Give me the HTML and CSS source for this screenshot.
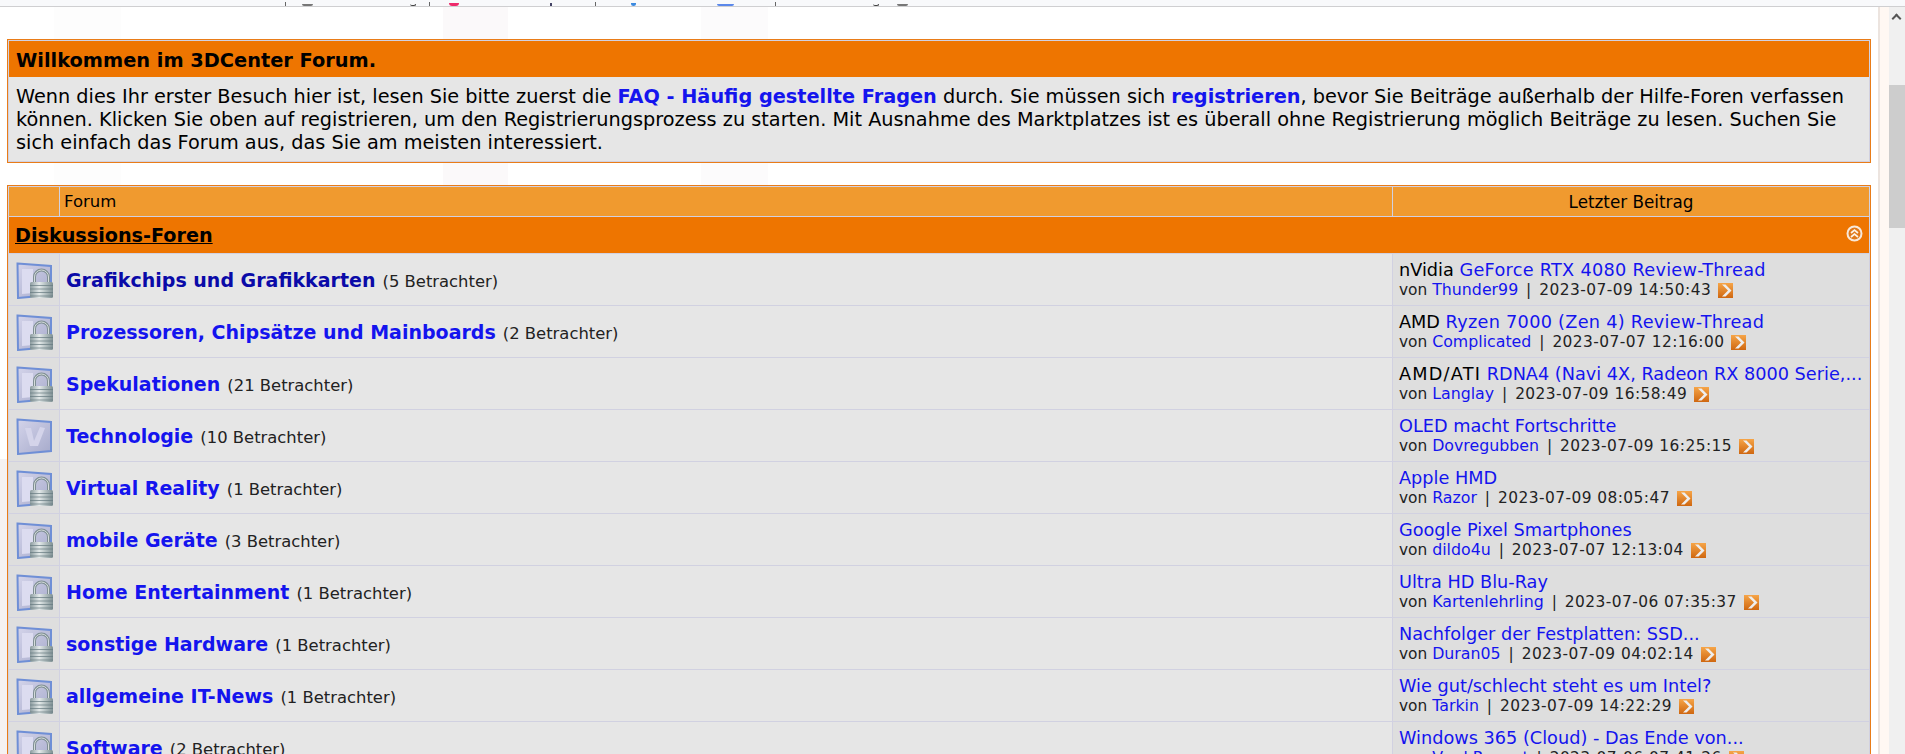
FILE: index.html
```html
<!DOCTYPE html>
<html lang="de">
<head>
<meta charset="utf-8">
<title>3DCenter Forum</title>
<link rel="stylesheet" href="styles.css">
</head>
<body>
<svg class="defs" width="0" height="0" aria-hidden="true">
  <defs>
    <linearGradient id="lockBody" x1="0" y1="0" x2="1" y2="0">
      <stop offset="0" stop-color="#8a9a9e"/><stop offset="0.4" stop-color="#e4eaea"/><stop offset="1" stop-color="#7d8f92"/>
    </linearGradient>
    <linearGradient id="pane" x1="0" y1="0" x2="1" y2="1">
      <stop offset="0" stop-color="#d4d4ea"/><stop offset="1" stop-color="#a6aacb"/>
    </linearGradient>
    <linearGradient id="goBtn" x1="0" y1="0" x2="0" y2="1">
      <stop offset="0" stop-color="#f6a548"/><stop offset="1" stop-color="#cf6710"/>
    </linearGradient>
    <symbol id="locked" viewBox="0 0 37 37">
      <path d="M1.5 1.5 L35 4 V33 L2 36 Z" fill="url(#pane)" stroke="#6f8fd6" stroke-width="2"/>
      <path d="M6 7 H17 V31 L6 32 Z" fill="#dcdcf0"/>
      <path d="M18.5 20 V15 a7 7 0 0 1 14 0 V20" fill="none" stroke="#7f8f93" stroke-width="3"/>
      <path d="M18.5 20 V15 a7 7 0 0 1 14 0 V20" fill="none" stroke="#d5dcdc" stroke-width="1"/>
      <rect x="14" y="20" width="23" height="16" rx="1.5" fill="url(#lockBody)"/>
      <path d="M14 23.5 H37 M14 27 H37 M14 30.5 H37 M14 34 H37" stroke="#667a80" stroke-width="1" opacity=".7"/>
    </symbol>
    <symbol id="open" viewBox="0 0 37 37">
      <path d="M1.5 1.5 L35 4 V33 L2 36 Z" fill="url(#pane)" stroke="#6f8fd6" stroke-width="2"/>
      <path d="M9 10 L15 10 L18 23 L24 9 L29 10 L22 28 L14 28 Z" fill="#d4d4ea"/>
    </symbol>
    <symbol id="go" viewBox="0 0 15 15">
      <rect width="15" height="15" fill="url(#goBtn)"/>
      <path d="M4 1.5 L10 7.5 L4 13.5 H7.5 L13.5 7.5 L7.5 1.5 Z" fill="#eee"/>
    </symbol>
  </defs>
</svg>

<div class="browser-strip">
  <i class="mark mark-bar m1"></i><i class="mark mark-dot m2"></i><i class="mark mark-hook m10"></i><i class="mark mark-bar m3"></i>
  <i class="mark mark-pink m4"></i><i class="mark mark-tick m11"></i><i class="mark mark-bar m5"></i><i class="mark mark-blue m6"></i>
  <i class="mark mark-wide m7"></i><i class="mark mark-bar m8"></i><i class="mark mark-hook m12"></i><i class="mark mark-dot m9"></i>
</div>

<div class="viewport">
  <main class="page">
    <section class="welcome">
      <h1 class="welcome-head">Willkommen im 3DCenter Forum.</h1>
      <p class="welcome-body">Wenn dies Ihr erster Besuch hier ist, lesen Sie bitte zuerst die <a href="#"><b>FAQ - Häufig gestellte Fragen</b></a> durch. Sie müssen sich <a href="#"><b>registrieren</b></a>, bevor Sie Beiträge außerhalb der Hilfe-Foren verfassen können. Klicken Sie oben auf registrieren, um den Registrierungsprozess zu starten. Mit Ausnahme des Marktplatzes ist es überall ohne Registrierung möglich Beiträge zu lesen. Suchen Sie sich einfach das Forum aus, das Sie am meisten interessiert.</p>
    </section>

    <table class="forums">
      <colgroup><col class="c-icon"><col class="c-forum"><col class="c-last"></colgroup>
      <thead>
        <tr class="head-row"><th></th><th class="th-forum">Forum</th><th class="th-last">Letzter Beitrag</th></tr>
      </thead>
      <tbody>
        <tr class="cat-row"><td colspan="3"><div class="cat-inner"><a href="#">Diskussions-Foren</a>
          <svg class="collapse" width="17" height="17" viewBox="0 0 17 17"><circle cx="8.5" cy="8.5" r="7" fill="#e0781a" stroke="#f8e8d8" stroke-width="2"/><path d="M5 8 L8.5 5 L12 8 M5 12 L8.5 9 L12 12" fill="none" stroke="#fdf3e6" stroke-width="1.7"/></svg></div></td></tr>

        <tr><td class="ic"><svg class="f-icon"><use href="#locked"/></svg></td><td class="fc"><a class="ft visited" href="#">Grafikchips und Grafikkarten</a> <span class="vw">(5 Betrachter)</span></td><td class="lc"><div class="l1">nVidia <a class="wide" href="#">GeForce RTX 4080 Review-Thread</a></div><div class="l2">von <a href="#">Thunder99</a> <span class="sep">|</span> <span class="dt">2023-07-09 14:50:43</span> <svg class="go"><use href="#go"/></svg></div></td></tr>
        <tr><td class="ic"><svg class="f-icon"><use href="#locked"/></svg></td><td class="fc"><a class="ft" href="#">Prozessoren, Chipsätze und Mainboards</a> <span class="vw">(2 Betrachter)</span></td><td class="lc"><div class="l1">AMD <a class="wide" href="#">Ryzen 7000 (Zen 4) Review-Thread</a></div><div class="l2">von <a href="#">Complicated</a> <span class="sep">|</span> <span class="dt">2023-07-07 12:16:00</span> <svg class="go"><use href="#go"/></svg></div></td></tr>
        <tr><td class="ic"><svg class="f-icon"><use href="#locked"/></svg></td><td class="fc"><a class="ft" href="#">Spekulationen</a> <span class="vw">(21 Betrachter)</span></td><td class="lc"><div class="l1"><span class="pre-wide">AMD/ATI</span> <a href="#">RDNA4 (Navi 4X, Radeon RX 8000 Serie,...</a></div><div class="l2">von <a href="#">Langlay</a> <span class="sep">|</span> <span class="dt">2023-07-09 16:58:49</span> <svg class="go"><use href="#go"/></svg></div></td></tr>
        <tr><td class="ic"><svg class="f-icon"><use href="#open"/></svg></td><td class="fc"><a class="ft" href="#">Technologie</a> <span class="vw">(10 Betrachter)</span></td><td class="lc"><div class="l1"><a href="#">OLED macht Fortschritte</a></div><div class="l2">von <a href="#">Dovregubben</a> <span class="sep">|</span> <span class="dt">2023-07-09 16:25:15</span> <svg class="go"><use href="#go"/></svg></div></td></tr>
        <tr><td class="ic"><svg class="f-icon"><use href="#locked"/></svg></td><td class="fc"><a class="ft" href="#">Virtual Reality</a> <span class="vw">(1 Betrachter)</span></td><td class="lc"><div class="l1"><a href="#">Apple HMD</a></div><div class="l2">von <a href="#">Razor</a> <span class="sep">|</span> <span class="dt">2023-07-09 08:05:47</span> <svg class="go"><use href="#go"/></svg></div></td></tr>
        <tr><td class="ic"><svg class="f-icon"><use href="#locked"/></svg></td><td class="fc"><a class="ft" href="#">mobile Geräte</a> <span class="vw">(3 Betrachter)</span></td><td class="lc"><div class="l1"><a href="#">Google Pixel Smartphones</a></div><div class="l2">von <a href="#">dildo4u</a> <span class="sep">|</span> <span class="dt">2023-07-07 12:13:04</span> <svg class="go"><use href="#go"/></svg></div></td></tr>
        <tr><td class="ic"><svg class="f-icon"><use href="#locked"/></svg></td><td class="fc"><a class="ft" href="#">Home Entertainment</a> <span class="vw">(1 Betrachter)</span></td><td class="lc"><div class="l1"><a href="#">Ultra HD Blu-Ray</a></div><div class="l2">von <a href="#">Kartenlehrling</a> <span class="sep">|</span> <span class="dt">2023-07-06 07:35:37</span> <svg class="go"><use href="#go"/></svg></div></td></tr>
        <tr><td class="ic"><svg class="f-icon"><use href="#locked"/></svg></td><td class="fc"><a class="ft" href="#">sonstige Hardware</a> <span class="vw">(1 Betrachter)</span></td><td class="lc"><div class="l1"><a href="#">Nachfolger der Festplatten: SSD...</a></div><div class="l2">von <a href="#">Duran05</a> <span class="sep">|</span> <span class="dt">2023-07-09 04:02:14</span> <svg class="go"><use href="#go"/></svg></div></td></tr>
        <tr><td class="ic"><svg class="f-icon"><use href="#locked"/></svg></td><td class="fc"><a class="ft" href="#">allgemeine IT-News</a> <span class="vw">(1 Betrachter)</span></td><td class="lc"><div class="l1"><a href="#">Wie gut/schlecht steht es um Intel?</a></div><div class="l2">von <a href="#">Tarkin</a> <span class="sep">|</span> <span class="dt">2023-07-09 14:22:29</span> <svg class="go"><use href="#go"/></svg></div></td></tr>
        <tr><td class="ic"><svg class="f-icon"><use href="#locked"/></svg></td><td class="fc"><a class="ft" href="#">Software</a> <span class="vw">(2 Betrachter)</span></td><td class="lc"><div class="l1"><a href="#">Windows 365 (Cloud) - Das Ende von...</a></div><div class="l2">von <a href="#">Vard Regent</a> <span class="sep">|</span> <span class="dt">2023-07-06 07:41:26</span> <svg class="go"><use href="#go"/></svg></div></td></tr>
      </tbody>
    </table>
  </main>
  <aside class="scrollbar"><span class="sb-arrow"></span><span class="sb-thumb"></span></aside>
</div>
</body>
</html>
```
FILE: styles.css
```css
html, body { margin: 0; height: 100%; overflow: hidden; }
body { font-family: "DejaVu Sans", Verdana, sans-serif; font-size: 16px; color: #000; background: #fff; display: flex; flex-direction: column; }
a { color: #1414ee; text-decoration: none; }
.defs { position: absolute; }

.browser-strip { height: 6px; flex: none; background: #f8f9fb; border-bottom: 1px solid #cfcfd1; position: relative; overflow: hidden; }
.mark { position: absolute; bottom: 0; display: block; }
.mark-bar { width: 1px; height: 4px; background: #666; }
.mark-dot { width: 11px; height: 2px; background: #777; border-radius: 0 0 5px 5px; }
.mark-pink { width: 10px; height: 3px; background: #ee2a6b; border-radius: 0 0 5px 5px; }
.mark-blue { width: 5px; height: 3px; background: #3b8ae0; border-radius: 0 0 3px 3px; }
.mark-wide { width: 17px; height: 2px; background: #5b88ea; border-radius: 0 0 2px 2px; }
.mark-hook { width: 6px; height: 2px; border-bottom: 1px solid #444; border-right: 1px solid #444; border-radius: 0 0 3px 3px; box-sizing: border-box; }
.mark-tick { width: 2px; height: 3px; background: #446; }
.m1 { left: 285px; } .m2 { left: 302px; } .m10 { left: 410px; } .m3 { left: 429px; } .m4 { left: 449px; }
.m11 { left: 550px; } .m5 { left: 595px; } .m6 { left: 631px; } .m7 { left: 717px; } .m8 { left: 775px; } .m12 { left: 873px; } .m9 { left: 897px; }

.viewport { flex: 1; display: flex; min-height: 0; }
.page { flex: 1; min-width: 0; padding: 32px 0 0 7px; overflow: hidden; border-right: 9px solid #fff8f3; box-shadow: inset -2px 0 0 #ece4df;
  background:
    linear-gradient(#f5f2f3, #f5f2f3) no-repeat 0 452px / 7px 100%,
    linear-gradient(90deg, transparent 0 54px, #fdfdfd 54px 121px, transparent 121px 443px, #fbf9fa 443px 508px, transparent 508px 701px, #fcfbfc 701px 768px, transparent 768px),
    #fff; }

.welcome { width: 1864px; box-sizing: border-box; border: 1px solid #e97c18; background: #d1d1e1; padding: 1px; margin-bottom: 22px; }
.welcome-head { margin: 0; height: 36px; line-height: 39px; padding-left: 7px; background: #ee7500; font-size: 19.35px; font-weight: bold; }
.welcome-body { margin: 0; padding: 8px 7px 7px; background: #e6e6e6; font-size: 19.3px; line-height: 23px; }

.forums { width: 1864px; table-layout: fixed; border-collapse: separate; border-spacing: 1px; background: #d1d1e1; border: 1px solid #e97c18; box-sizing: border-box; }
.c-icon { width: 50px; }
.c-last { width: 476px; }
.head-row th { height: 29px; padding: 0; background: #f09a2f; font-weight: normal; font-size: 16.5px; }
.head-row .th-forum { text-align: left; padding-left: 4px; }
.head-row .th-last { font-size: 16.8px; }
.cat-row td { height: 36px; padding: 0; background: #ee7500; }
.cat-inner { display: flex; align-items: center; justify-content: space-between; padding: 1px 6px 0; }
.cat-inner a { color: #000; font-weight: bold; font-size: 19.2px; text-decoration: underline; }
.collapse { margin-top: -4px; }

tbody tr:not(.cat-row) td { height: 51px; padding: 0; }
.ic { background: #dedede; }
.f-icon { width: 37px; height: 37px; display: block; margin: 2px auto 0; }
.fc { background: #e6e6e6; padding-left: 6px !important; }
.ft { font-size: 19px; font-weight: bold; }
.ft.visited { color: #0a0aa8; }
.vw { font-size: 16.4px; color: #222; margin-left: 2px; }
.lc { background: #dedede; padding: 2px 0 0 6px !important; white-space: nowrap; overflow: hidden; font-size: 17.7px; line-height: 19px; box-sizing: border-box; }
.l1 { color: #000; }
.wide { letter-spacing: 0.28px; }
.pre-wide { letter-spacing: 1.2px; }
.l2 { color: #222; font-size: 15.4px; }
.l2 a { font-size: 15.8px; }
.sep { margin: 0 3px; }
.dt { letter-spacing: 0.45px; }
.go { width: 15px; height: 15px; vertical-align: -3px; margin-left: 2px; }

.scrollbar { flex: none; width: 16px; background: #f0f0f0; position: relative; }
.sb-arrow { position: absolute; top: 8px; left: 4px; width: 7px; height: 7px; border-left: 2px solid #555; border-top: 2px solid #555; transform: rotate(45deg); box-sizing: border-box; }
.sb-thumb { position: absolute; top: 78px; left: 0; right: 0; height: 143px; background: #cdcdcd; }
```
